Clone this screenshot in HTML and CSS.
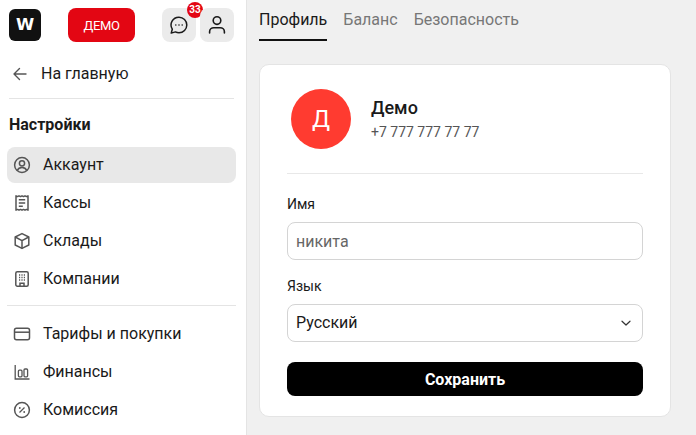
FILE: index.html
```html
<!DOCTYPE html>
<html>
<head>
  <meta charset="UTF-8">
  <link rel="stylesheet" href="styles.css">
</head>
<body>
  <div class="layout">
    <aside class="sidebar">
      <div class="topbar">
        <div class="logo">W</div>
        <button class="demo-button">ДЕМО</button>
        <div class="top-actions">
          <div class="icon-button">
            <svg width="22" height="22" viewBox="0 0 22 22" fill="none" stroke="#1a1a1a" stroke-width="1.5" stroke-linejoin="round">
              <path d="M11 3.2a7.8 7.8 0 0 1 0 15.6c-1.3 0-2.5-.3-3.6-.9l-4.2 1.2 1.1-3.9A7.8 7.8 0 0 1 11 3.2z"/>
              <circle cx="7.8" cy="11" r=".8" fill="#1a1a1a" stroke="none"/>
              <circle cx="11" cy="11" r=".8" fill="#1a1a1a" stroke="none"/>
              <circle cx="14.2" cy="11" r=".8" fill="#1a1a1a" stroke="none"/>
            </svg>
            <span class="badge">33</span>
          </div>
          <div class="icon-button">
            <svg width="22" height="22" viewBox="0 0 22 22" fill="none" stroke="#1a1a1a" stroke-width="1.6" stroke-linecap="round">
              <circle cx="11" cy="6.6" r="3.8"/>
              <path d="M3.6 19v-1.2c0-2.4 1.9-4.1 4.2-4.1h6.4c2.3 0 4.2 1.7 4.2 4.1V19"/>
            </svg>
          </div>
        </div>
      </div>

      <a class="back-link">
        <svg width="16" height="16" viewBox="0 0 16 16" fill="none" stroke="#555" stroke-width="1.4" stroke-linecap="round" stroke-linejoin="round">
          <path d="M14 8H2M7.5 2.5 2 8l5.5 5.5"/>
        </svg>
        На главную
      </a>

      <h2 class="nav-title">Настройки</h2>

      <nav class="nav">
        <a class="nav-item active">
          <svg width="18" height="18" viewBox="0 0 18 18" fill="none" stroke="#555" stroke-width="1.5">
            <circle cx="9" cy="9" r="7.4"/>
            <circle cx="9" cy="7.3" r="2.6"/>
            <path d="M4.3 14.4c.8-2 2.5-3 4.7-3s3.900 1 4.700 3"/>
          </svg>
          <span class="nav-text">Аккаунт</span>
        </a>
        <a class="nav-item">
          <svg width="18" height="18" viewBox="0 0 18 18" fill="none" stroke="#555" stroke-width="1.5" stroke-linejoin="round">
            <path d="M3 1.800l1.500.8 1.500-.8 1.500.8 1.500-.8 1.500.8 1.500-.8 1.500.8 1.500-.8v14.400l-1.500-.8-1.500.8-1.500-.8-1.500.8-1.500-.8-1.500.8-1.500-.8-1.500.8z"/>
            <path d="M5.800 5.800h6.400M5.800 9h6.400M5.800 12.200h4"/>
          </svg>
          <span class="nav-text">Кассы</span>
        </a>
        <a class="nav-item">
          <svg width="18" height="18" viewBox="0 0 18 18" fill="none" stroke="#555" stroke-width="1.5" stroke-linejoin="round">
            <path d="M9 1.600 15.800 5v8L9 16.400 2.200 13V5z"/>
            <path d="M2.200 5 9 8.700 15.800 5M9 8.700v7.700"/>
          </svg>
          <span class="nav-text">Склады</span>
        </a>
        <a class="nav-item">
          <svg width="18" height="18" viewBox="0 0 18 18" fill="none" stroke="#555" stroke-width="1.5">
            <rect x="2.800" y="1.800" width="12.400" height="14.400" rx="1.500"/>
            <path d="M7 16.200v-3h4v3"/>
            <path d="M6 5h1.200M8.400 5h1.200M10.800 5H12M6 7.500h1.200M8.400 7.500h1.200M10.800 7.500H12M6 10h1.200M8.400 10h1.200M10.800 10H12"/>
          </svg>
          <span class="nav-text">Компании</span>
        </a>
        <div class="nav-divider"></div>
        <a class="nav-item">
          <svg width="18" height="18" viewBox="0 0 18 18" fill="none" stroke="#555" stroke-width="1.5">
            <rect x="1.500" y="3.200" width="15" height="11.600" rx="2"/>
            <path d="M1.500 7.200h15"/>
          </svg>
          <span class="nav-text">Тарифы и покупки</span>
        </a>
        <a class="nav-item">
          <svg width="18" height="18" viewBox="0 0 18 18" fill="none" stroke="#555" stroke-width="1.300">
            <path d="M2.200 2v14h14.300"/>
            <rect x="5.400" y="7.200" width="3.600" height="6.600" rx="1"/>
            <rect x="11" y="6" width="3.600" height="7.800" rx="1"/>
          </svg>
          <span class="nav-text">Финансы</span>
        </a>
        <a class="nav-item">
          <svg width="18" height="18" viewBox="0 0 18 18" fill="none" stroke="#555" stroke-width="1.500">
            <circle cx="9" cy="9" r="7.400"/>
            <path d="M6.500 11.500l5-5" stroke-width="1.200"/>
            <circle cx="6.800" cy="7" r=".9" fill="#555" stroke="none"/>
            <circle cx="11.200" cy="11" r=".9" fill="#555" stroke="none"/>
          </svg>
          <span class="nav-text">Комиссия</span>
        </a>
      </nav>
    </aside>

    <main class="main">
      <div class="tabs">
        <a class="tab active">Профиль</a>
        <a class="tab">Баланс</a>
        <a class="tab">Безопасность</a>
      </div>

      <section class="card">
        <div class="profile">
          <div class="avatar">Д</div>
          <div>
            <div class="profile-name">Демо</div>
            <div class="profile-phone">+7 777 777 77 77</div>
          </div>
        </div>

        <form class="form">
          <label class="field-label" for="name">Имя</label>
          <input class="field" id="name" placeholder="никита">

          <label class="field-label" for="lang">Язык</label>
          <div class="field select-field" id="lang">
            <span class="select-value">Русский</span>
            <svg width="12" height="12" viewBox="0 0 12 12" fill="none" stroke="#333" stroke-width="1.200" stroke-linecap="round" stroke-linejoin="round">
              <path d="M2 4.200 6 8l4-3.800"/>
            </svg>
          </div>

          <button class="save-button" type="button">Сохранить</button>
        </form>
      </section>
    </main>
  </div>
</body>
</html>
```

FILE: styles.css
```css
html, body {
  height: 435px;
  overflow: hidden;
}

body {
  margin: 0;
  font-family: Roboto, "Liberation Sans", sans-serif;
  font-size: 16px;
  background: #f0f0f0;
  color: #1a1a1a;
}

.layout {
  display: flex;
  height: 435px;
}

.sidebar {
  width: 247px;
  flex-shrink: 0;
  box-sizing: border-box;
  background: #ffffff;
  border-right: 1px solid #e4e4e4;
  padding: 8px 10px 0 7px;
}

.topbar {
  display: flex;
  align-items: center;
  padding-left: 2px;
}

.logo {
  width: 32px;
  height: 32px;
  border-radius: 6px;
  background: #111111;
  color: #ffffff;
  font-family: "DejaVu Sans", sans-serif;
  font-weight: 700;
  font-size: 16.5px;
  line-height: 32px;
  text-align: center;
}

.demo-button {
  width: 67px;
  height: 34px;
  margin-left: 27px;
  border: none;
  border-radius: 8px;
  background: #e30613;
  color: #ffffff;
  font-family: inherit;
  font-size: 13px;
  letter-spacing: -0.4px;
}

.top-actions {
  display: flex;
  gap: 4px;
  margin-left: 27px;
}

.icon-button {
  position: relative;
  width: 34px;
  height: 34px;
  border-radius: 8px;
  background: #ebebeb;
  display: flex;
  align-items: center;
  justify-content: center;
}

.badge {
  position: absolute;
  top: -6px;
  right: -7px;
  width: 16px;
  height: 16px;
  border-radius: 50%;
  background: #e30613;
  color: #ffffff;
  font-size: 10px;
  font-weight: 700;
  line-height: 16px;
  text-align: center;
}

.back-link {
  display: flex;
  align-items: center;
  gap: 13px;
  margin: 8px 2px 0 2px;
  padding: 0 0 1px 3px;
  height: 49px;
  border-bottom: 1px solid #e4e4e4;
  box-sizing: border-box;
}

.nav-title {
  margin: 15px 0 11px 2px;
  font-size: 16px;
  line-height: 22px;
  font-weight: 700;
}

.nav {
  display: flex;
  flex-direction: column;
  gap: 2px;
}

.nav-item {
  display: flex;
  align-items: center;
  gap: 12px;
  height: 36px;
  padding: 0 6px;
  border-radius: 8px;
}

.nav-text {
  margin-bottom: 2px;
}

.nav-item.active {
  background: #e8e8e8;
}

.nav-divider {
  height: 1px;
  background: #e4e4e4;
  margin: 6px 0 8px;
}

.main {
  flex: 1;
  padding: 0 25px 0 12px;
}

.tabs {
  display: flex;
  gap: 16px;
  height: 41px;
  margin-bottom: 23px;
}

.tab {
  color: #777777;
  line-height: 39px;
}

.tab.active {
  color: #1a1a1a;
  border-bottom: 2px solid #111111;
}

.card {
  box-sizing: border-box;
  height: 353px;
  padding: 24px 27px 0;
  background: #ffffff;
  border: 1px solid #e4e4e4;
  border-radius: 10px;
}

.profile {
  display: flex;
  align-items: center;
  gap: 20px;
  padding: 0 0 24px 4px;
  border-bottom: 1px solid #e8e8e8;
}

.avatar {
  width: 60px;
  height: 60px;
  border-radius: 50%;
  background: #ff3b30;
  color: #ffffff;
  font-size: 24px;
  line-height: 60px;
  text-align: center;
}

.profile-name {
  font-size: 18px;
  font-weight: 500;
  line-height: 24px;
}

.profile-phone {
  margin-top: 2px;
  font-size: 14px;
  line-height: 20px;
  color: #555555;
}

.form {
  display: flex;
  flex-direction: column;
  padding-top: 21px;
}

.field-label {
  font-size: 14px;
  line-height: 18px;
  margin-bottom: 9px;
}

.field {
  box-sizing: border-box;
  width: 100%;
  height: 38px;
  padding: 0 8px;
  margin-bottom: 17px;
  border: 1px solid #d4d4d4;
  border-radius: 8px;
  background: #ffffff;
  color: #1a1a1a;
  font-family: inherit;
  font-size: 16px;
}

.field::placeholder {
  color: #666666;
}

.select-field {
  display: flex;
  align-items: center;
  justify-content: space-between;
  padding-right: 10px;
  margin-bottom: 20px;
}

.select-value {
  margin-bottom: 2px;
}

.save-button {
  height: 34px;
  border: none;
  border-radius: 8px;
  background: #000000;
  color: #ffffff;
  font-family: inherit;
  font-size: 16px;
  font-weight: 700;
}
```
